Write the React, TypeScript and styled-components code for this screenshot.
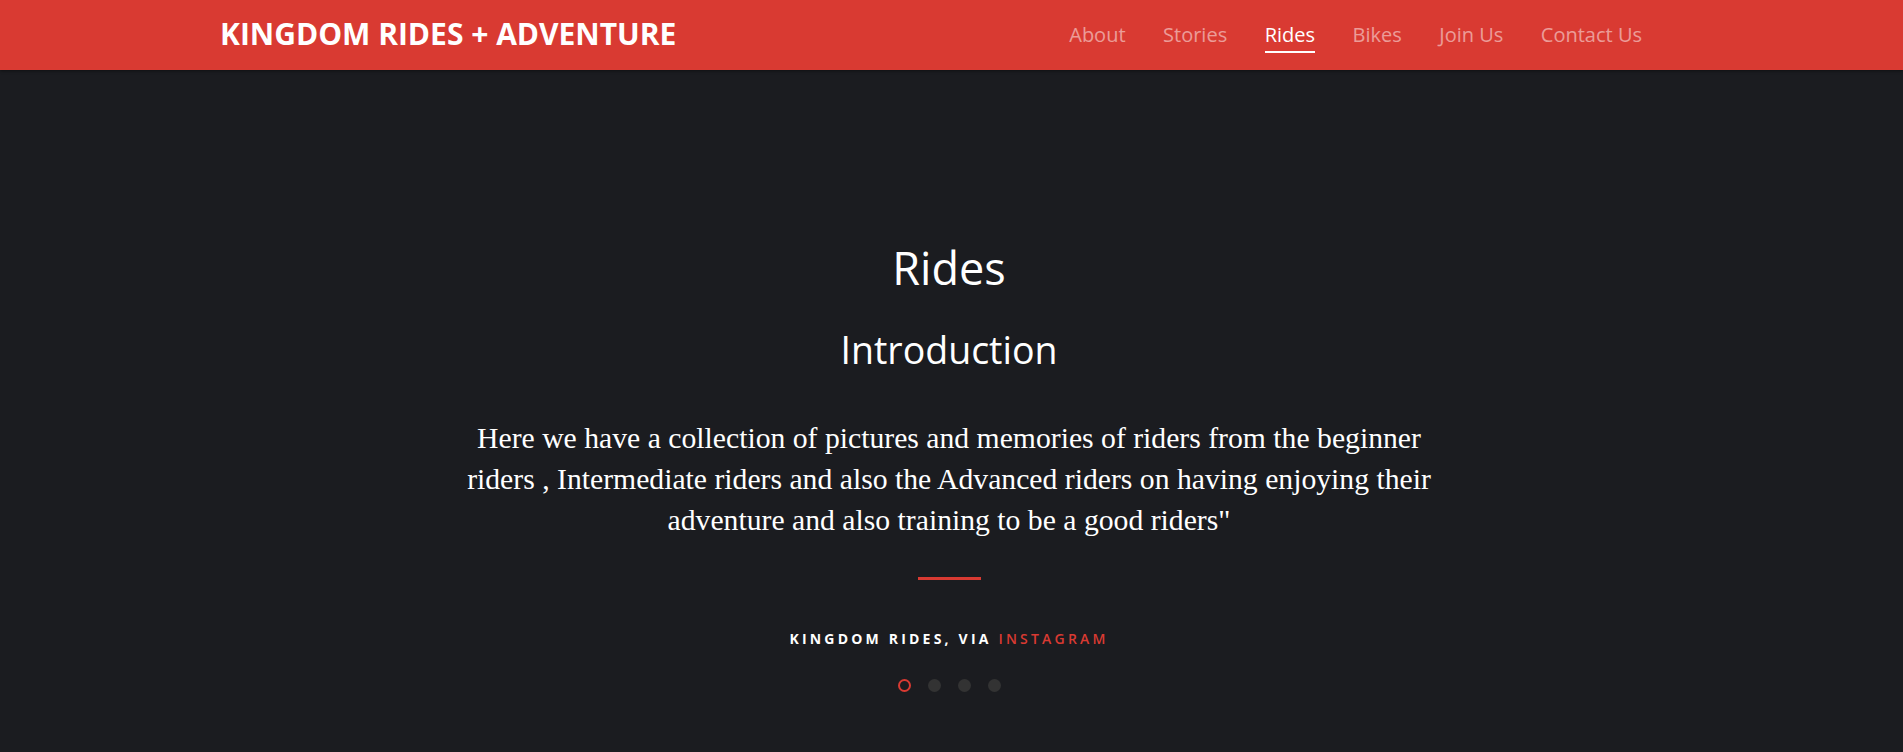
import React from "react";
import styled, { createGlobalStyle } from "styled-components";

const Global = createGlobalStyle`
  html, body { margin: 0; padding: 0; background: #1b1c20; }
  body { font-family: "Open Sans", "Liberation Sans", sans-serif; color: #fff; }
  * { box-sizing: border-box; }
`;

const Page = styled.div`
  min-height: 752px;
  background: #1b1c20;
  padding-right: 5px;
`;

const Header = styled.header`
  height: 70px;
  background: #d93a32;
  box-shadow: 0 1px 3px rgba(0, 0, 0, 0.45);
  display: flex;
  align-items: center;
  justify-content: space-between;
  padding: 0 220px;
  margin-right: -5px;
`;

const Brand = styled.a`
  font-family: "Open Sans", sans-serif;
  font-weight: 700;
  font-size: 30px;
  color: #fff;
  text-decoration: none;
  margin-top: -3px;
`;

const Nav = styled.nav`
  display: flex;
  align-items: center;
  gap: 37.5px;
  padding-right: 41px;
`;

const NavLink = styled.a<{ $active?: boolean }>`
  font-family: "Open Sans", sans-serif;
  font-size: 20px;
  color: ${(p) => (p.$active ? "#fff" : "rgba(255,255,255,0.5)")};
  text-decoration: none;
  padding-bottom: 3px;
  border-bottom: 2px solid ${(p) => (p.$active ? "#fff" : "transparent")};
  margin-top: 3px;
`;

const Hero = styled.section`
  display: flex;
  flex-direction: column;
  align-items: center;
  text-align: center;
  padding-top: 175px;
`;

const Title = styled.h1`
  margin: 0;
  font-family: "Open Sans", sans-serif;
  font-weight: 400;
  font-size: 45px;
  line-height: 1;
`;

const Subtitle = styled.h2`
  margin: 41px 0 0;
  font-family: "Open Sans", sans-serif;
  font-weight: 400;
  font-size: 37.5px;
  line-height: 1;
`;

const Quote = styled.p`
  margin: 49px 0 0;
  max-width: 1010px;
  font-family: "Liberation Serif", serif;
  font-size: 29.7px;
  line-height: 41px;
  color: #fff;
`;

const Divider = styled.div`
  width: 63px;
  height: 3px;
  background: #d93a32;
  margin-top: 36px;
`;

const Caption = styled.div`
  margin-top: 49px;
  font-family: "Open Sans", sans-serif;
  font-weight: 700;
  font-size: 14px;
  letter-spacing: 3.2px;
  text-transform: uppercase;
  color: #fff;
`;

const Accent = styled.span`
  color: #d93a32;
  font-weight: 600;
`;

const Dots = styled.div`
  display: flex;
  gap: 17px;
  margin-top: 31px;
`;

const Dot = styled.span<{ $active?: boolean }>`
  width: 13px;
  height: 13px;
  border-radius: 50%;
  background: ${(p) => (p.$active ? "transparent" : "#333")};
  border: ${(p) => (p.$active ? "2px solid #d93a32" : "none")};
`;

export default function App() {
  const links = ["About", "Stories", "Rides", "Bikes", "Join Us", "Contact Us"];
  return (
    <Page>
      <Global />
      <Header>
        <Brand href="#">KINGDOM RIDES + ADVENTURE</Brand>
        <Nav>
          {links.map((l) => (
            <NavLink key={l} href="#" $active={l === "Rides"}>
              {l}
            </NavLink>
          ))}
        </Nav>
      </Header>
      <Hero>
        <Title>Rides</Title>
        <Subtitle>Introduction</Subtitle>
        <Quote>
          Here we have a collection of pictures and memories of riders from the beginner riders , Intermediate
          riders and also the Advanced riders on having enjoying their adventure and also training to be a good
          riders"
        </Quote>
        <Divider />
        <Caption>
          Kingdom Rides, via <Accent>Instagram</Accent>
        </Caption>
        <Dots>
          <Dot $active />
          <Dot />
          <Dot />
          <Dot />
        </Dots>
      </Hero>
    </Page>
  );
}
